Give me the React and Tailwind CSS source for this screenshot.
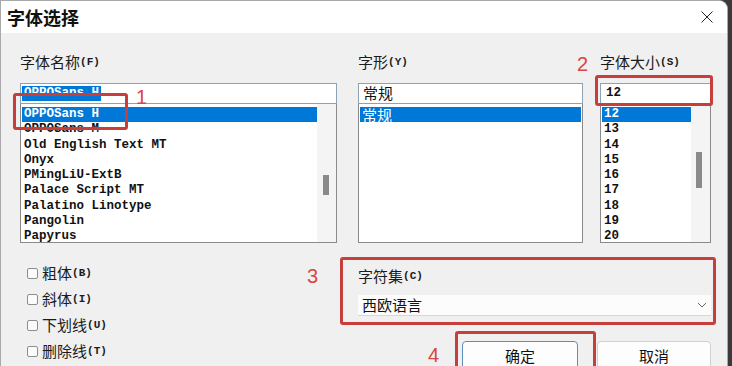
import React from "react";

const cjk = "font-['Noto_Sans_CJK_SC',sans-serif]";
const mono = "font-['Liberation_Mono',monospace]";

const fonts = [
  "OPPOSans H",
  "OPPOSans M",
  "Old English Text MT",
  "Onyx",
  "PMingLiU-ExtB",
  "Palace Script MT",
  "Palatino Linotype",
  "Pangolin",
  "Papyrus",
];

const sizes = ["12", "13", "14", "15", "16", "17", "18", "19", "20"];

function Label({ text, k }) {
  return (
    <div className="flex h-5 items-center text-[15px] leading-5 text-[#1b1b1b]">
      <span className={cjk}>{text}</span>
      <span className={`${mono} text-[11px] font-bold`}>({k})</span>
    </div>
  );
}

function ListRows({ items, selected = 0, cjkText = false }) {
  return (
    <div className="flex-1 pt-[3px] pl-[1px]">
      {items.map((item, i) => (
        <div
          key={item}
          className={[
            "h-[15.25px] pl-[2px] leading-[15px] whitespace-nowrap",
            cjkText ? `${cjk} text-[15px]` : `${mono} text-[12.5px] font-bold`,
            i === selected ? "bg-[#0078d7] text-white" : "text-[#111]",
          ].join(" ")}
        >
          {item}
        </div>
      ))}
    </div>
  );
}

function Scrollbar({ top, height, left }) {
  return (
    <div className="flex w-[19px] flex-col bg-[#f4f4f4]">
      <div
        className="w-[6px] bg-[#8a8a8a]"
        style={{ marginTop: top, height, marginLeft: left }}
      />
    </div>
  );
}

function Checkbox({ text, k }) {
  return (
    <div className="flex h-5 items-center">
      <span className="mr-[4px] h-[11px] w-[11px] rounded-[2px] border border-[#8d8d8d] bg-[#fbfbfb]" />
      <Label text={text} k={k} />
    </div>
  );
}

function RedBox({ className }) {
  return (
    <div
      className={`pointer-events-none absolute rounded-[3px] border-[3px] border-[#c63f3b] ${className}`}
    />
  );
}

function Num({ n, className }) {
  return (
    <div
      className={`absolute font-['Liberation_Sans',sans-serif] text-[20px] leading-5 text-[#d8463f] ${className}`}
    >
      {n}
    </div>
  );
}

export default function App() {
  return (
    <div className="flex h-[366px] w-[732px] overflow-hidden bg-[#3a3a3a]">
      <div className="relative flex h-[366px] w-[728px] flex-col overflow-hidden rounded-tr-[9px] border-l border-t border-r border-[#a9a9a9] bg-[#f0f0f0]">
        {/* title bar */}
        <div className="flex h-[32px] shrink-0 items-center justify-between bg-white pl-[6px] pr-[14px]">
          <span className={`${cjk} text-[18px] font-bold text-[#111]`}>
            字体选择
          </span>
          <svg viewBox="0 0 12 12" className="h-[12px] w-[12px]" stroke="#222" strokeWidth="1">
            <path d="M0.5 0.5L11.5 11.5M11.5 0.5L0.5 11.5" />
          </svg>
        </div>

        {/* body */}
        <div className="shrink-0 pl-[19px] pt-[19px]">
          <div className="flex">
            {/* font name */}
            <div className="w-[317px]">
              <Label text="字体名称" k="F" />
              <div className="mt-[11px] flex h-[21px] items-center border border-[#8da2b3] bg-white pl-[1px]">
                <span className={`${mono} bg-[#0078d7] px-[2px] text-[12.5px] font-bold leading-[15px] text-white`}>
                  OPPOSans H
                </span>
              </div>
              <div className="flex h-[139px] border border-t-0 border-[#8a8a8a] bg-white">
                <ListRows items={fonts} />
                <Scrollbar top={71} height={20} left={6} />
              </div>
            </div>

            {/* style */}
            <div className="ml-[21px] w-[225px]">
              <Label text="字形" k="Y" />
              <div className={`mt-[11px] flex h-[21px] items-center border border-[#8da2b3] bg-white pl-[4px] ${cjk} text-[15px] text-[#111]`}>
                常规
              </div>
              <div className="flex h-[139px] border border-t-0 border-[#8a8a8a] bg-white pr-[1px]">
                <ListRows items={["常规"]} cjkText />
              </div>
            </div>

            {/* size */}
            <div className="ml-[17px] w-[111px]">
              <Label text="字体大小" k="S" />
              <div className={`mt-[11px] flex h-[21px] items-center border border-[#8da2b3] bg-white pl-[5px] ${mono} text-[12.5px] font-bold text-[#111]`}>
                12
              </div>
              <div className="flex h-[139px] border border-t-0 border-[#8a8a8a] bg-white">
                <ListRows items={sizes} />
                <Scrollbar top={48} height={36} left={5} />
              </div>
            </div>
          </div>

          <div className="flex">
            {/* effects */}
            <div className="flex w-[338px] flex-col gap-[6px] pl-[7px] pt-[20px]">
              <Checkbox text="粗体" k="B" />
              <Checkbox text="斜体" k="I" />
              <Checkbox text="下划线" k="U" />
              <Checkbox text="删除线" k="T" />
            </div>

            {/* charset + buttons */}
            <div className="w-[353px] pt-[23px]">
              <Label text="字符集" k="C" />
              <div className="mt-[9px] flex h-[21px] items-center justify-between border-b border-[#d6d6d6] bg-[#fcfcfc] pl-[4px] pr-[4px]">
                <span className={`${cjk} text-[15px] text-[#111]`}>西欧语言</span>
                <svg viewBox="0 0 10 6" className="h-[6px] w-[10px]" fill="none" stroke="#666" strokeWidth="1">
                  <path d="M1 1l4 4 4-4" />
                </svg>
              </div>
              <div className="mt-[25px] flex justify-end gap-[19px]">
                <button className={`h-[30px] w-[116px] rounded-[4px] border border-[#5e8fb6] bg-[#fdfdfd] ${cjk} text-[15px] text-[#111]`}>
                  确定
                </button>
                <button className={`h-[30px] w-[114px] rounded-[4px] border border-[#d0d0d0] bg-[#fdfdfd] ${cjk} text-[15px] text-[#111]`}>
                  取消
                </button>
              </div>
            </div>
          </div>
        </div>

        {/* annotations */}
        <RedBox className="left-[12px] top-[92px] h-[37px] w-[115px]" />
        <Num n="1" className="left-[135px] top-[86px]" />
        <RedBox className="left-[594px] top-[74px] h-[31px] w-[118px]" />
        <Num n="2" className="left-[576px] top-[53px]" />
        <RedBox className="left-[339px] top-[256px] h-[68px] w-[376px]" />
        <Num n="3" className="left-[306px] top-[265px]" />
        <RedBox className="left-[454px] top-[330px] h-[45px] w-[141px]" />
        <Num n="4" className="left-[427px] top-[344px]" />
      </div>
    </div>
  );
}
